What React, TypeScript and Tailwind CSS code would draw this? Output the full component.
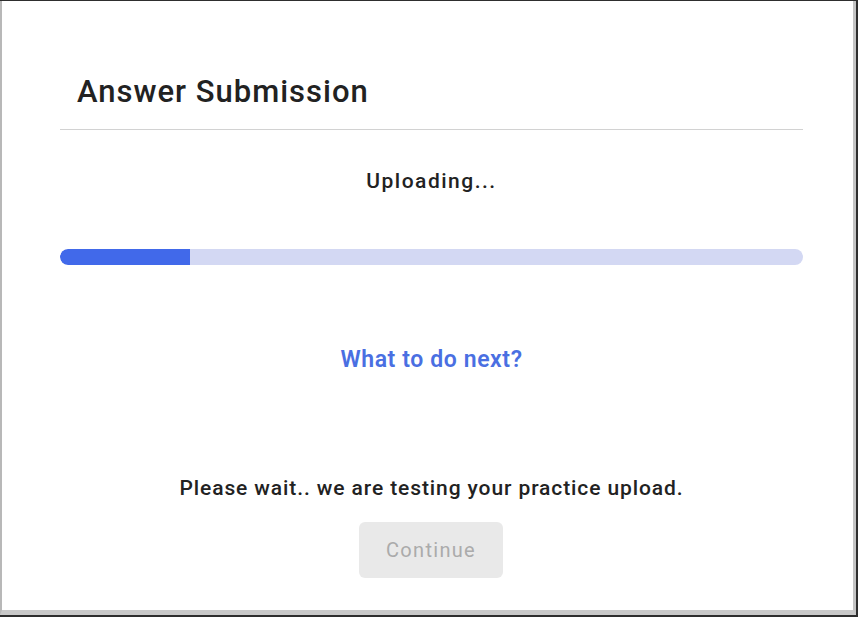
export default function App() {
  const progress = 17.5

  return (
    <div className="w-[858px] h-[617px] bg-[#2e2e2e] pt-px pr-[2px] pb-[2px] font-['Roboto',sans-serif]">
      <div className="h-full border-l-2 border-l-[#b8b8b8] border-r-[3px] border-r-[#c4c4c4] border-b-[5px] border-b-[#c9c9c9] bg-white">
        <div className="flex flex-col w-[743px] ml-[58px]">
          {/* Header */}
          <h1 className="pt-[73px] pl-[17px] text-[31px] font-medium leading-[36px] text-[#222] tracking-[1px]">
            Answer Submission
          </h1>
          <div className="mt-[19px] h-px bg-[#d2d2d2]" />

          {/* Status */}
          <p className="mt-[38px] text-center text-[21px] font-medium leading-[26px] text-[#222] tracking-[1.5px]">
            Uploading...
          </p>

          <div className="mt-[55px] h-[16px] w-full rounded-full bg-[#d3d8f3] overflow-hidden">
            <div className="h-full rounded-l-full bg-[#4169ea]" style={{ width: `${progress}%` }} />
          </div>

          <a className="mt-[81px] text-center text-[23px] font-semibold leading-[28px] text-[#4a6fe2] tracking-[0.6px] cursor-pointer">
            What to do next?
          </a>

          <p className="mt-[101px] text-center text-[21px] font-medium leading-[26px] text-[#222] tracking-[0.9px]">
            Please wait.. we are testing your practice upload.
          </p>

          <div className="mt-[21px] flex justify-center">
            <button
              disabled
              className="w-[144px] h-[56px] rounded-md bg-[#e9e9e9] text-[20px] text-[#ababab] tracking-[1.3px] -ml-[1px]"
            >
              Continue
            </button>
          </div>
        </div>
      </div>
    </div>
  )
}
